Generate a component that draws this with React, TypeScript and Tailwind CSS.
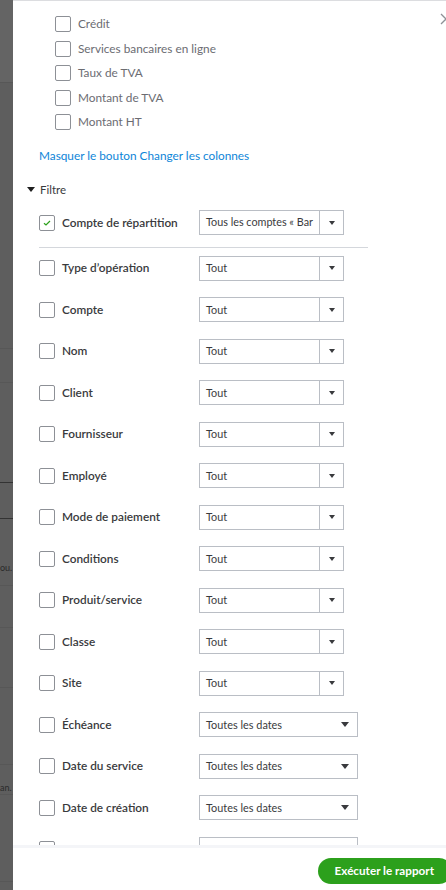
import React from "react";

const columnOptions = [
  "Crédit",
  "Services bancaires en ligne",
  "Taux de TVA",
  "Montant de TVA",
  "Montant HT",
];

type Filter = { label: string; value: string; kind: "list" | "date" };

const filters: Filter[] = [
  { label: "Type d’opération", value: "Tout", kind: "list" },
  { label: "Compte", value: "Tout", kind: "list" },
  { label: "Nom", value: "Tout", kind: "list" },
  { label: "Client", value: "Tout", kind: "list" },
  { label: "Fournisseur", value: "Tout", kind: "list" },
  { label: "Employé", value: "Tout", kind: "list" },
  { label: "Mode de paiement", value: "Tout", kind: "list" },
  { label: "Conditions", value: "Tout", kind: "list" },
  { label: "Produit/service", value: "Tout", kind: "list" },
  { label: "Classe", value: "Tout", kind: "list" },
  { label: "Site", value: "Tout", kind: "list" },
  { label: "Échéance", value: "Toutes les dates", kind: "date" },
  { label: "Date du service", value: "Toutes les dates", kind: "date" },
  { label: "Date de création", value: "Toutes les dates", kind: "date" },
  { label: "", value: "", kind: "date" },
];

const Box = ({ checked = false }: { checked?: boolean }) => (
  <span className="flex h-4 w-4 shrink-0 items-center justify-center rounded-[2px] border border-[#8d9096] bg-white">
    {checked && (
      <svg width="8" height="6" viewBox="0 0 8 6" fill="none">
        <path d="M1 3.2 3 5 7 1" stroke="#2ca01c" strokeWidth="1.2" />
      </svg>
    )}
  </span>
);

const ListSelect = ({ value }: { value: string }) => (
  <div className="flex h-[25px] w-[145px] border border-[#babec5] bg-white">
    <div className="flex flex-1 items-center overflow-hidden whitespace-nowrap border-r border-[#babec5] pl-[6px] text-[10.8px] text-[#393a3d]">
      {value}
    </div>
    <div className="flex w-[23px] items-center justify-center">
      <svg width="6" height="4" viewBox="0 0 6 4">
        <path d="M0 0h6L3 4z" fill="#393a3d" />
      </svg>
    </div>
  </div>
);

const DateSelect = ({ value }: { value: string }) => (
  <div className="flex h-[25px] w-[159px] items-center justify-between border border-[#babec5] bg-white pr-[8px] pl-[6px]">
    <span className="text-[10.9px] text-[#393a3d]">{value}</span>
    <svg width="8" height="5" viewBox="0 0 8 5">
      <path d="M0 0h8L4 5z" fill="#393a3d" />
    </svg>
  </div>
);

const BackgroundStrip = () => (
  <div className="flex h-full w-[13px] shrink-0 flex-col bg-[#5e5e5e] text-[9px] leading-none text-[#2a2a2a]">
    <div className="h-[83px] border-b border-[#575757] bg-[#646464]" />
    <div className="h-[266px] border-b border-[#575757]" />
    <div className="h-[34px] border-b border-[#575757]" />
    <div className="h-[100px] border-b border-[#333333]" />
    <div className="h-[36px] border-b border-[#333333]" />
    <div className="flex h-[67px] items-end overflow-hidden border-b border-[#575757] pb-[13px]">ou.</div>
    <div className="h-[42px] border-b border-[#575757]" />
    <div className="h-[60px] border-b border-[#575757]" />
    <div className="h-[77px] border-b border-[#575757]" />
    <div className="flex h-[30px] items-end overflow-hidden border-b border-[#575757] pb-[2px]">an.</div>
    <div className="h-[87px] border-b border-[#575757]" />
  </div>
);

export default function App() {
  return (
    <div className="flex h-[890px] w-[446px] overflow-hidden bg-white font-['Lato','Noto_Sans',sans-serif]">
      <BackgroundStrip />
      <div className="relative flex h-full flex-1 flex-col overflow-hidden border-t border-[#dcdde0] bg-white">
        <svg
          className="absolute top-[12px] right-[-6px]"
          width="12"
          height="12"
          viewBox="0 0 12 12"
        >
          <path d="M1 1l10 10M11 1 1 11" stroke="#8d9096" strokeWidth="1.3" />
        </svg>

        <div className="h-[844px] overflow-hidden">
          <div className="pt-[11px] pl-[42px]">
            {columnOptions.map((c) => (
              <div key={c} className="flex h-[24.5px] items-center gap-[7px]">
                <Box />
                <span className="text-[11.8px] text-[#6b6c72]">{c}</span>
              </div>
            ))}
          </div>

          <div className="mt-[13px] pl-[26px] text-[11.8px] leading-4 text-[#0d85d8]">
            Masquer le bouton Changer les colonnes
          </div>

          <div className="mt-[18px] flex h-4 items-center gap-[5px] pl-[14px] text-[11.5px] text-[#393a3d]">
            <svg width="8" height="5" viewBox="0 0 8 5">
              <path d="M0 0h8L4 5z" fill="#1f1f1f" />
            </svg>
            Filtre
          </div>

          <div className="pl-[26px]">
            <div className="mt-[4px] flex h-[42px] items-center">
              <div className="flex w-[160px] items-center gap-[7px]">
                <Box checked />
                <span className="text-[11.8px] font-semibold text-[#393a3d]">
                  Compte de répartition
                </span>
              </div>
              <ListSelect value="Tous les comptes « Bar" />
            </div>
            <div className="mt-[3px] h-px w-[329px] bg-[#d4d7dc]" />

            {filters.map((f, i) => (
              <div key={i} className="flex h-[41.5px] items-center">
                <div className="flex w-[160px] items-center gap-[7px]">
                  <Box />
                  <span className="text-[11.8px] font-semibold text-[#393a3d]">
                    {f.label}
                  </span>
                </div>
                {f.kind === "list" ? (
                  <ListSelect value={f.value} />
                ) : (
                  <DateSelect value={f.value} />
                )}
              </div>
            ))}
          </div>
        </div>

        <div className="flex flex-1 items-center justify-end border-t-[3px] border-[#f4f5f8] bg-white pt-[4px]">
          <button className="mr-[-6px] h-[26px] rounded-full bg-[#2ca01c] pr-[18px] pl-[17px] text-[11.7px] font-bold text-white">
            Exécuter le rapport
          </button>
        </div>
      </div>
    </div>
  );
}
